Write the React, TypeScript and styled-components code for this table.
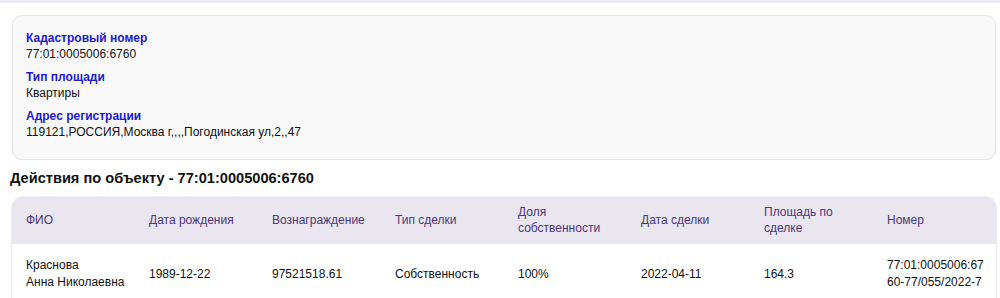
import React from 'react';
import styled, { createGlobalStyle } from 'styled-components';

const GlobalStyle = createGlobalStyle`
  html, body {
    margin: 0;
    padding: 0;
    background: #ffffff;
    font-family: 'Liberation Sans', Arial, sans-serif;
    color: #111111;
  }
`;

const TopStrip = styled.div`
  height: 3px;
  background: #ece9fa;
`;

const Page = styled.div`
  padding: 12px 3px 0 11px;
`;

const InfoCard = styled.section`
  margin: 0 1px 0 1px;
  padding: 14px 13px 12px;
  background: #f8f8f9;
  border: 1px solid #e4e4e6;
  border-radius: 10px;
`;

const Field = styled.div`
  margin-bottom: 7px;
  font-size: 12px;
  line-height: 16px;
`;

const Label = styled.div`
  color: #1b1bc4;
  font-weight: 700;
`;

const Value = styled.div`
  color: #111111;
`;

const Heading = styled.h2`
  margin: 9px 0 9px -1px;
  font-size: 14.6px;
  line-height: 18px;
  font-weight: 700;
  color: #111111;
`;

const TableWrap = styled.div`
  border: 1px solid #ececee;
  border-bottom: none;
  border-radius: 12px 12px 0 0;
  overflow: hidden;
`;

const Table = styled.table`
  width: 100%;
  border-collapse: collapse;
  table-layout: fixed;
  font-size: 12px;
`;

const HeadCell = styled.th`
  padding: 7px 10px 8px 14px;
  height: 32px;
  background: #e9e6ef;
  color: #4a3778;
  font-weight: 400;
  line-height: 16px;
  text-align: left;
  vertical-align: middle;
`;

const Cell = styled.td<{ $wrap?: 'none' | 'any' }>`
  padding: 13px 10px 13px 14px;
  line-height: 17px;
  color: #111111;
  vertical-align: middle;
  white-space: ${(p) => (p.$wrap === 'none' ? 'nowrap' : 'normal')};
  word-break: ${(p) => (p.$wrap === 'any' ? 'break-all' : 'normal')};
`;

const fields = [
  { label: 'Кадастровый номер', value: '77:01:0005006:6760' },
  { label: 'Тип площади', value: 'Квартиры' },
  { label: 'Адрес регистрации', value: '119121,РОССИЯ,Москва г,,,,Погодинская ул,2,,47' },
];

const columns = [
  'ФИО',
  'Дата рождения',
  'Вознаграждение',
  'Тип сделки',
  'Доля собственности',
  'Дата сделки',
  'Площадь по сделке',
  'Номер',
];

const deals = [
  {
    surname: 'Краснова',
    name: 'Анна Николаевна',
    birth: '1989-12-22',
    reward: '97521518.61',
    kind: 'Собственность',
    share: '100%',
    date: '2022-04-11',
    area: '164.3',
    number: '77:01:0005006:6760-77/055/2022-7',
  },
];

export default function App() {
  return (
    <>
      <GlobalStyle />
      <TopStrip />
      <Page>
        <InfoCard>
          {fields.map((f) => (
            <Field key={f.label}>
              <Label>{f.label}</Label>
              <Value>{f.value}</Value>
            </Field>
          ))}
        </InfoCard>
        <Heading>Действия по объекту - 77:01:0005006:6760</Heading>
        <TableWrap>
          <Table>
            <thead>
              <tr>
                {columns.map((c) => (
                  <HeadCell key={c}>{c}</HeadCell>
                ))}
              </tr>
            </thead>
            <tbody>
              {deals.map((d) => (
                <tr key={d.number}>
                  <Cell $wrap="none">
                    {d.surname}
                    <br />
                    {d.name}
                  </Cell>
                  <Cell>{d.birth}</Cell>
                  <Cell>{d.reward}</Cell>
                  <Cell>{d.kind}</Cell>
                  <Cell>{d.share}</Cell>
                  <Cell>{d.date}</Cell>
                  <Cell>{d.area}</Cell>
                  <Cell $wrap="any">{d.number}</Cell>
                </tr>
              ))}
            </tbody>
          </Table>
        </TableWrap>
      </Page>
    </>
  );
}
